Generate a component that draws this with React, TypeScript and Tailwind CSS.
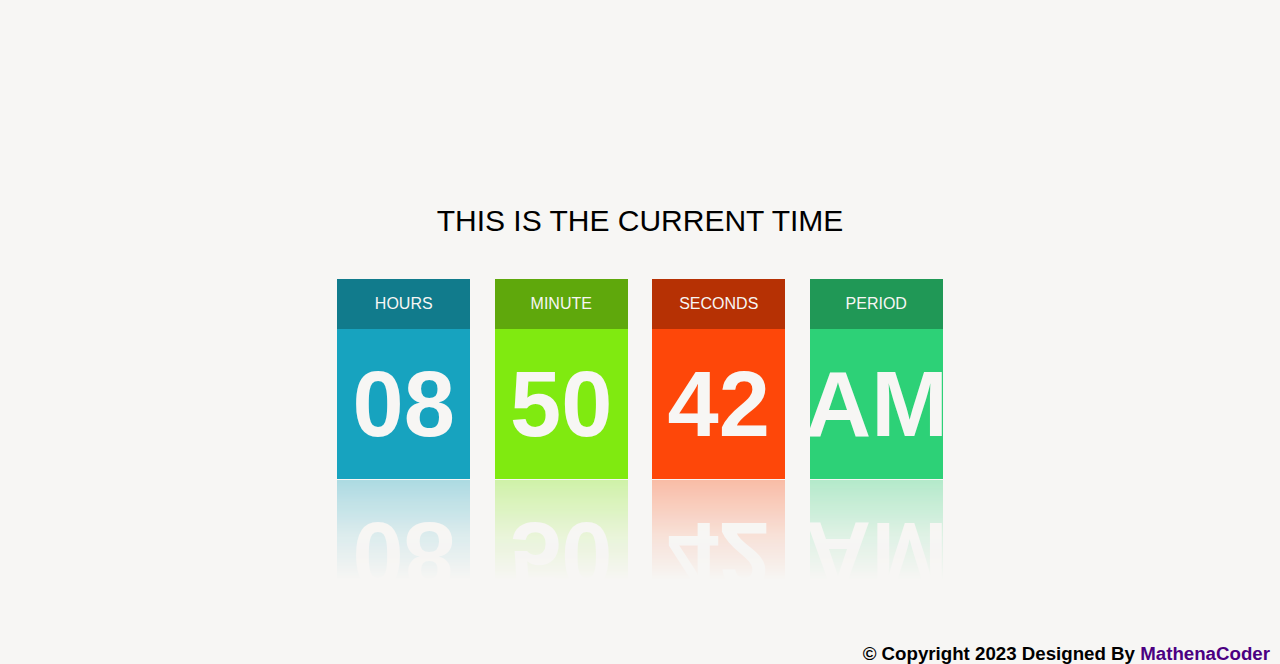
const units = [
  { label: "HOURS", value: "08", head: "bg-[#117b8c]", body: "bg-[#17a3bf]" },
  { label: "MINUTE", value: "50", head: "bg-[#5fa80c]", body: "bg-[#80ea10]" },
  { label: "SECONDS", value: "42", head: "bg-[#b63104]", body: "bg-[#fe4709]" },
  { label: "PERIOD", value: "AM", head: "bg-[#209856]", body: "bg-[#2dd177]" },
];

function Face({ value, body }: { value: string; body: string }) {
  return (
    <div
      className={`flex h-[150px] w-[133px] items-center justify-center overflow-hidden ${body}`}
    >
      <span className="whitespace-nowrap text-[92px] font-bold leading-none text-[#f7f6f4]">
        {value}
      </span>
    </div>
  );
}

export default function App() {
  return (
    <main
      className="flex h-screen flex-col overflow-hidden bg-[#f7f6f4] text-black"
      style={{ fontFamily: '"Liberation Sans", Arial, sans-serif' }}
    >
      <section className="flex flex-col items-center pt-[204px]">
        <h1 className="text-[30px] leading-[34px] font-normal">
          THIS IS THE CURRENT TIME
        </h1>

        <div className="mt-[41px] flex gap-[24.5px]">
          {units.map((unit) => (
            <div key={unit.label} className="flex w-[133px] flex-col">
              <div
                className={`flex h-[50px] items-center justify-center text-[16px] text-[#f7f6f4] ${unit.head}`}
              >
                {unit.label}
              </div>
              <Face value={unit.value} body={unit.body} />
              <div className="h-px" />
              <div className="h-[100px] overflow-hidden [mask-image:linear-gradient(to_bottom,rgba(0,0,0,0.33),rgba(0,0,0,0.12)_55%,transparent_100%)]">
                <div className="-scale-y-100">
                  <Face value={unit.value} body={unit.body} />
                </div>
              </div>
            </div>
          ))}
        </div>
      </section>

      <footer className="mt-auto pr-[10px] text-right text-[18.7px] font-bold leading-[21px]">
        © Copyright 2023 Designed By{" "}
        <span className="text-[#4b0082]">MathenaCoder</span>
      </footer>
    </main>
  );
}
